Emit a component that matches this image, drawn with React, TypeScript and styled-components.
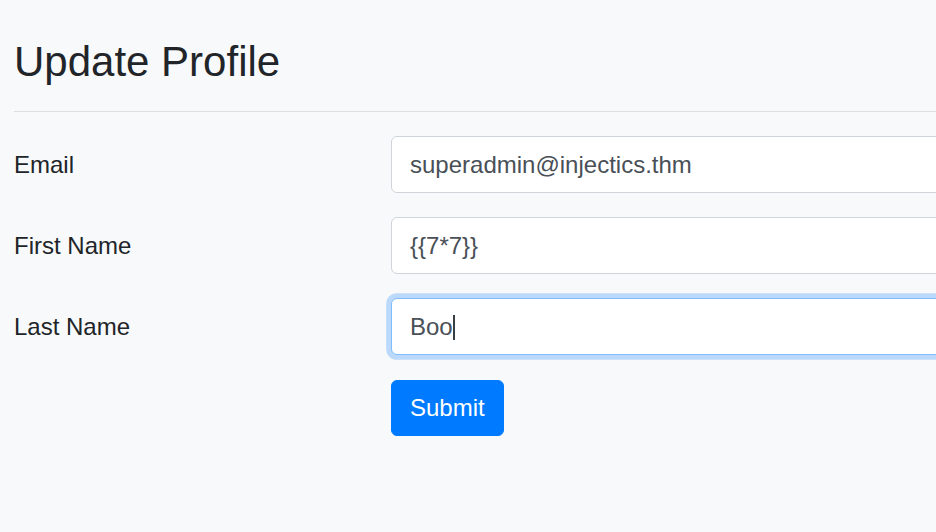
import React from "react";
import styled, { createGlobalStyle, css } from "styled-components";

const GlobalStyle = createGlobalStyle`
  html, body {
    margin: 0;
    padding: 0;
    background: #f8f9fa;
    overflow: hidden;
  }
  body {
    font-family: "Liberation Sans", Arial, sans-serif;
    color: #212529;
  }
  * { box-sizing: border-box; }
`;

const Viewport = styled.div`
  width: 100vw;
  height: 100vh;
  overflow: hidden;
  background: #f8f9fa;
`;

const Page = styled.div`
  width: 1300px;
  padding: 37px 0 40px 14px;
`;

const Title = styled.h3`
  margin: 0;
  font-size: 42px;
  font-weight: 500;
  line-height: 1.2;
  color: #212529;
`;

const Divider = styled.hr`
  margin: 24px 0;
  border: 0;
  border-top: 1.5px solid rgba(0, 0, 0, 0.1);
`;

const Form = styled.form`
  display: flex;
  flex-direction: column;
  gap: 24px;
`;

const FormRow = styled.div`
  display: grid;
  grid-template-columns: 377px 1fr;
  align-items: start;
`;

const ButtonRow = styled(FormRow)`
  padding-top: 1px;
`;

const Label = styled.label`
  padding: 10.5px 0;
  font-size: 24px;
  line-height: 1.5;
  color: #212529;
`;

const FieldBox = styled.div`
  position: relative;
`;

const Input = styled.input<{ $focused?: boolean }>`
  display: block;
  width: 100%;
  height: 57px;
  padding: 9px 18px;
  font-family: "Liberation Sans", Arial, sans-serif;
  font-size: 24px;
  line-height: 1.5;
  color: #495057;
  background: #fff;
  border: 1.5px solid #ced4da;
  border-radius: 6px;
  outline: none;
  caret-color: transparent;
  ${(p) =>
    p.$focused &&
    css`
      border-color: #80bdff;
      box-shadow: 0 0 0 4.8px rgba(0, 123, 255, 0.25);
    `}
`;

const CaretLayer = styled.div`
  position: absolute;
  inset: 0;
  padding: 10.5px 19.5px;
  font-size: 24px;
  line-height: 1.5;
  white-space: pre;
  pointer-events: none;
`;

const Ghost = styled.span`
  color: transparent;
`;

const Caret = styled.span`
  display: inline-block;
  width: 1.5px;
  height: 25px;
  vertical-align: -5px;
  background: #3a3f44;
`;

const SubmitButton = styled.button`
  grid-column: 2;
  justify-self: start;
  padding: 9px 18px;
  font-family: "Liberation Sans", Arial, sans-serif;
  font-size: 24px;
  line-height: 1.5;
  color: #fff;
  background: #007bff;
  border: 1.5px solid #007bff;
  border-radius: 6px;
  cursor: pointer;
`;

const fields = [
  { id: "email", label: "Email", value: "superadmin@injectics.thm" },
  { id: "fname", label: "First Name", value: "{{7*7}}" },
  { id: "lname", label: "Last Name", value: "Boo", focused: true },
];

export default function App() {
  return (
    <>
      <GlobalStyle />
      <Viewport>
        <Page>
          <Title>Update Profile</Title>
          <Divider />
          <Form onSubmit={(e) => e.preventDefault()}>
            {fields.map((f) => (
              <FormRow key={f.id}>
                <Label htmlFor={f.id}>{f.label}</Label>
                <FieldBox>
                  <Input id={f.id} defaultValue={f.value} $focused={f.focused} readOnly />
                  {f.focused && (
                    <CaretLayer>
                      <Ghost>{f.value}</Ghost>
                      <Caret />
                    </CaretLayer>
                  )}
                </FieldBox>
              </FormRow>
            ))}
            <ButtonRow>
              <SubmitButton type="submit">Submit</SubmitButton>
            </ButtonRow>
          </Form>
        </Page>
      </Viewport>
    </>
  );
}
